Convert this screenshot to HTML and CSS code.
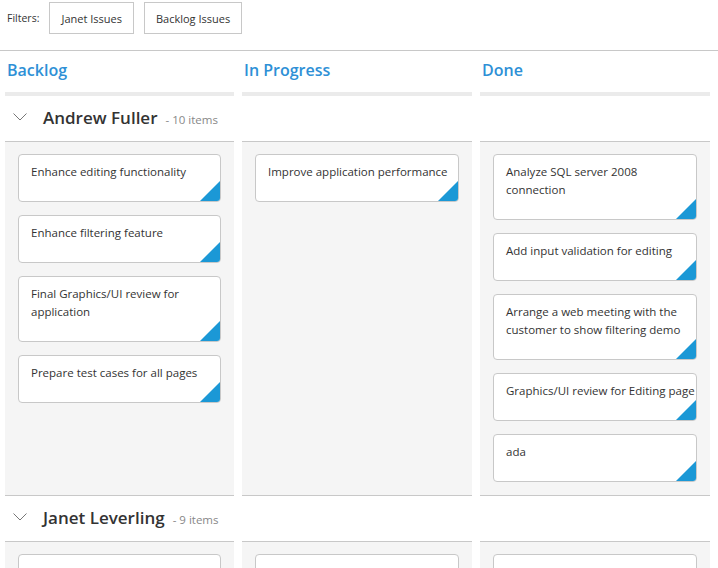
FILE: index.html
```html
<!DOCTYPE html>
<html>
<head>
<meta charset="utf-8">
<link rel="stylesheet" href="styles.css">
</head>
<body>
<div class="filters">
  <span class="filters-label">Filters:</span>
  <button class="filter-btn">Janet Issues</button>
  <button class="filter-btn">Backlog Issues</button>
</div>
<div class="board">
  <div class="col-head">Backlog</div>
  <div class="col-head">In Progress</div>
  <div class="col-head">Done</div>

  <div class="lane-head">
    <svg class="chev" width="14" height="8" viewBox="0 0 14 8"><polyline points="0.5,0.5 7,7 13.5,0.5" fill="none" stroke="#777" stroke-width="1"/></svg>
    <span class="lane-name">Andrew Fuller</span><span class="lane-count">- 10 items</span>
  </div>
  <div class="lane-head"></div>
  <div class="lane-head"></div>

  <div class="lane-cell">
    <div class="card">Enhance editing functionality</div>
    <div class="card">Enhance filtering feature</div>
    <div class="card">Final Graphics/UI review for application</div>
    <div class="card">Prepare test cases for all pages</div>
  </div>
  <div class="lane-cell">
    <div class="card">Improve application performance</div>
  </div>
  <div class="lane-cell">
    <div class="card">Analyze SQL server 2008 connection</div>
    <div class="card">Add input validation for editing</div>
    <div class="card">Arrange a web meeting with the customer to show filtering demo</div>
    <div class="card card-nowrap">Graphics/UI review for Editing page</div>
    <div class="card">ada</div>
  </div>

  <div class="lane-head">
    <svg class="chev" width="14" height="8" viewBox="0 0 14 8"><polyline points="0.5,0.5 7,7 13.5,0.5" fill="none" stroke="#777" stroke-width="1"/></svg>
    <span class="lane-name">Janet Leverling</span><span class="lane-count">- 9 items</span>
  </div>
  <div class="lane-head"></div>
  <div class="lane-head"></div>

  <div class="lane-cell">
    <div class="card">Arrange a web meeting with the customer to get new requirements</div>
  </div>
  <div class="lane-cell">
    <div class="card">Fix the issues reported in the IE browser</div>
  </div>
  <div class="lane-cell">
    <div class="card">Analyze the new requirements gathered from the customer</div>
  </div>
</div>
</body>
</html>
```
FILE: styles.css
```css
html, body {
  margin: 0;
  padding: 0;
  background: #fff;
  overflow: hidden;
}
body {
  font-family: "Open Sans", "Noto Sans", sans-serif;
  color: #333;
  width: 718px;
  height: 568px;
}
.filters {
  display: flex;
  align-items: flex-start;
  gap: 10px;
  padding: 2px 0 0 7px;
  height: 48px;
  border-bottom: 1px solid #c8c8c8;
}
.filters-label {
  font-size: 10.5px;
  line-height: 32px;
  color: #333;
  margin-right: 0;
}
.filter-btn {
  font-family: "Open Sans", "Noto Sans", sans-serif;
  font-size: 11px;
  color: #333;
  background: #fff;
  border: 1px solid #c8c8c8;
  height: 32px;
  padding: 0 11px;
  margin: 0;
  border-radius: 0;
}
.board {
  display: grid;
  grid-template-columns: 229px 230px 230px;
  column-gap: 8px;
  padding-left: 5px;
}
.col-head {
  height: 41px;
  line-height: 38px;
  padding-left: 2px;
  font-size: 16px;
  font-weight: 600;
  color: #2e90d6;
  border-bottom: 4px solid #ebebeb;
}
.lane-head {
  height: 45px;
  display: flex;
  align-items: center;
  padding-left: 8px;
  border-bottom: 1px solid #c8c8c8;
  white-space: nowrap;
}
.chev {
  margin-right: 16px;
  margin-top: -3px;
}
.lane-name {
  font-size: 17px;
  font-weight: 600;
  color: #333;
  margin-right: 8px;
  margin-top: -2px;
}
.lane-count {
  font-size: 11.5px;
  color: #888;
  margin-top: 2px;
}
.lane-cell {
  background: #f5f5f5;
  padding: 12px 13px 13px;
  border-bottom: 1px solid #c8c8c8;
  display: flex;
  flex-direction: column;
  gap: 13px;
}
.card {
  position: relative;
  overflow: hidden;
  background: #fff;
  border: 1px solid #c8c8c8;
  border-radius: 4px;
  padding: 8px 3px 20px 12px;
  font-size: 11.5px;
  line-height: 18px;
  color: #333;
}
.card-nowrap {
  white-space: nowrap;
}
.card::after {
  content: "";
  position: absolute;
  right: 0;
  bottom: 0;
  width: 0;
  height: 0;
  border-left: 20px solid transparent;
  border-bottom: 20px solid #1b98d6;
}
```
